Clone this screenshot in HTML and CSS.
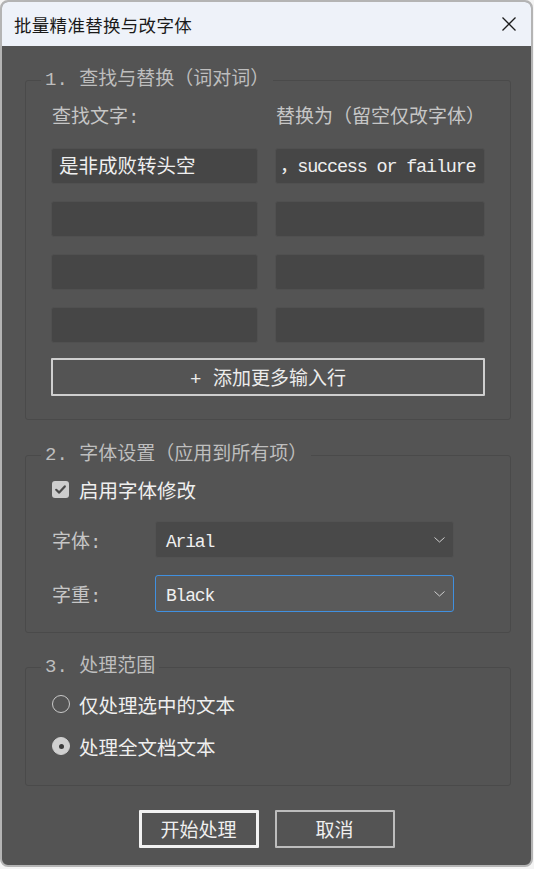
FILE: index.html
```html
<!DOCTYPE html>
<html lang="zh-CN">
<head>
<meta charset="utf-8">
<title>批量精准替换与改字体</title>
<link rel="stylesheet" href="styles.css">
</head>
<body>
<div class="window">
  <div class="titlebar">
    <span class="title">批量精准替换与改字体</span>
    <svg class="close" width="16" height="16" viewBox="0 0 16 16"><path d="M1.5 1.5L14.5 14.5M14.5 1.5L1.5 14.5" stroke="#1c1c1c" stroke-width="1.3" fill="none"/></svg>
  </div>
  <div class="content">
    <fieldset class="group g1">
      <legend>1. 查找与替换（词对词）</legend>
      <div class="pairs">
        <div class="col-label">查找文字:</div>
        <div class="col-label">替换为（留空仅改字体）</div>
        <input class="field" type="text" value="是非成败转头空">
        <input class="field latin" type="text" value="，success or failure">
        <input class="field" type="text" value="">
        <input class="field" type="text" value="">
        <input class="field" type="text" value="">
        <input class="field" type="text" value="">
        <input class="field" type="text" value="">
        <input class="field" type="text" value="">
      </div>
      <button class="add-row">+ 添加更多输入行</button>
    </fieldset>

    <fieldset class="group g2">
      <legend>2. 字体设置（应用到所有项）</legend>
      <div class="check-row">
        <span class="checkbox"><svg width="17" height="17" viewBox="0 0 17 17"><path d="M4.2 8.8L7.2 11.6L12.8 5.4" stroke="#4a4a4a" stroke-width="2.2" fill="none" stroke-linecap="round" stroke-linejoin="round"/></svg></span>
        <span class="check-text">启用字体修改</span>
      </div>
      <div class="form-row first">
        <span class="form-label">字体:</span>
        <div class="select">
          <span class="select-value">Arial</span>
          <svg class="chev" width="11" height="6" viewBox="0 0 11 6"><path d="M0.5 0.5L5.5 5L10.5 0.5" stroke="#cfcfcf" stroke-width="1" fill="none"/></svg>
        </div>
      </div>
      <div class="form-row">
        <span class="form-label">字重:</span>
        <div class="select focused">
          <span class="select-value">Black</span>
          <svg class="chev" width="11" height="6" viewBox="0 0 11 6"><path d="M0.5 0.5L5.5 5L10.5 0.5" stroke="#cfcfcf" stroke-width="1" fill="none"/></svg>
        </div>
      </div>
    </fieldset>

    <fieldset class="group g3">
      <legend>3. 处理范围</legend>
      <div class="radio-row">
        <span class="radio"></span>
        <span class="radio-text">仅处理选中的文本</span>
      </div>
      <div class="radio-row second">
        <span class="radio checked"><span class="dot"></span></span>
        <span class="radio-text">处理全文档文本</span>
      </div>
    </fieldset>

    <div class="actions">
      <button class="btn primary">开始处理</button>
      <button class="btn">取消</button>
    </div>
  </div>
</div>
</body>
</html>
```

FILE: styles.css
```css
html, body {
  margin: 0;
  padding: 0;
  background: #f4f4f4;
}

body {
  font-family: "Liberation Mono", "Noto Sans CJK SC", monospace;
}

.window {
  box-sizing: border-box;
  width: 533px;
  height: 867px;
  border: 2px solid #b4b4b4;
  border-radius: 8px;
  overflow: hidden;
  background: #545454;
  display: flex;
  flex-direction: column;
}

.titlebar {
  height: 44px;
  flex: none;
  background: #eef2f9;
  display: flex;
  align-items: center;
  justify-content: space-between;
  padding: 0 14px 0 12px;
}

.title {
  font-family: "Noto Sans CJK SC", sans-serif;
  font-size: 17.5px;
  color: #1a1a1a;
  letter-spacing: 0.3px;
}

.close {
  display: block;
}

.content {
  padding: 22px 0 0 23px;
}

.group {
  box-sizing: border-box;
  width: 486px;
  margin: 0;
  min-inline-size: 0;
  border: 1px solid #4a4a4a;
  border-radius: 3px;
  padding: 0 25px 0 25px;
}

.group legend {
  margin-left: -10px;
  padding: 0 4px;
  font-size: 19px;
  line-height: 24px;
  color: #bebebe;
}

.g1 {
  padding-bottom: 23px;
}

.g2 {
  margin-top: 23px;
  padding-bottom: 20px;
}

.g3 {
  margin-top: 22px;
  padding-bottom: 27px;
}

/* group 1 */
.pairs {
  margin-top: 14px;
  display: grid;
  grid-template-columns: 1fr 1fr;
  column-gap: 17px;
  row-gap: 17px;
}

.col-label {
  font-size: 19px;
  line-height: 24px;
  color: #c6c6c6;
  padding-left: 1px;
  margin-bottom: 1px;
  white-space: nowrap;
}

.field {
  box-sizing: border-box;
  width: 100%;
  height: 36px;
  margin: 0;
  background: #464646;
  border: 1px solid #505050;
  border-radius: 3px;
  padding: 0 7px 4px 7px;
  font-family: "Liberation Mono", "Noto Sans CJK SC", monospace;
  font-size: 19.5px;
  color: #efefef;
  outline: none;
}

.field.latin {
  font-size: 18.5px;
  letter-spacing: -1.2px;
  padding-left: 4px;
}

.add-row {
  display: block;
  box-sizing: border-box;
  width: 100%;
  height: 38px;
  margin-top: 15px;
  background: #545454;
  border: 2px solid #cfcfcf;
  border-radius: 1px;
  font-family: "Liberation Mono", "Noto Sans CJK SC", monospace;
  font-size: 19px;
  color: #ececec;
  padding: 0;
}

/* group 2 */
.check-row {
  margin-top: 10px;
  height: 24px;
  display: flex;
  align-items: center;
  padding-left: 1px;
}

.checkbox {
  box-sizing: border-box;
  width: 17px;
  height: 17px;
  background: #cdcdcd;
  border-radius: 3px;
  display: flex;
}

.check-text {
  margin-left: 10px;
  font-size: 19.5px;
  color: #efefef;
}

.form-row {
  margin-top: 17px;
  display: grid;
  grid-template-columns: 104px 299px;
  align-items: center;
}

.form-row.first {
  margin-top: 20px;
}

.form-label {
  font-size: 19px;
  color: #c6c6c6;
  padding-left: 1px;
}

.select {
  box-sizing: border-box;
  height: 37px;
  background: #494949;
  border: 1px solid #525252;
  border-radius: 3px;
  display: flex;
  align-items: center;
  justify-content: space-between;
  padding: 0 8px 0 10px;
}

.select.focused {
  background: #5a5a5a;
  border-color: #4090e0;
}

.select-value {
  font-size: 18px;
  letter-spacing: -1.2px;
  color: #f0f0f0;
  padding-top: 4px;
}

.chev {
  display: block;
}

/* group 3 */
.radio-row {
  margin-top: 13px;
  height: 24px;
  display: flex;
  align-items: center;
  padding-left: 1px;
}

.radio-row.second {
  margin-top: 18px;
}

.radio {
  box-sizing: border-box;
  width: 18px;
  height: 18px;
  border: 1.5px solid #c9c9c9;
  border-radius: 50%;
  display: flex;
  align-items: center;
  justify-content: center;
}

.radio.checked {
  background: #d0d0d0;
  border-color: #d0d0d0;
}

.dot {
  width: 5px;
  height: 5px;
  border-radius: 50%;
  background: #3c3c3c;
}

.radio-text {
  margin-left: 9px;
  font-size: 19.5px;
  color: #efefef;
}

/* actions */
.actions {
  margin: 24px 0 0 -23px;
  display: flex;
  justify-content: center;
  gap: 16px;
}

.btn {
  box-sizing: border-box;
  width: 120px;
  height: 38px;
  background: #545454;
  border: 2px solid #bdbdbd;
  border-radius: 1px;
  font-family: "Liberation Mono", "Noto Sans CJK SC", monospace;
  font-size: 19px;
  color: #efefef;
  padding: 0;
}

.btn.primary {
  border: 3px solid #f2f2f2;
}
```
